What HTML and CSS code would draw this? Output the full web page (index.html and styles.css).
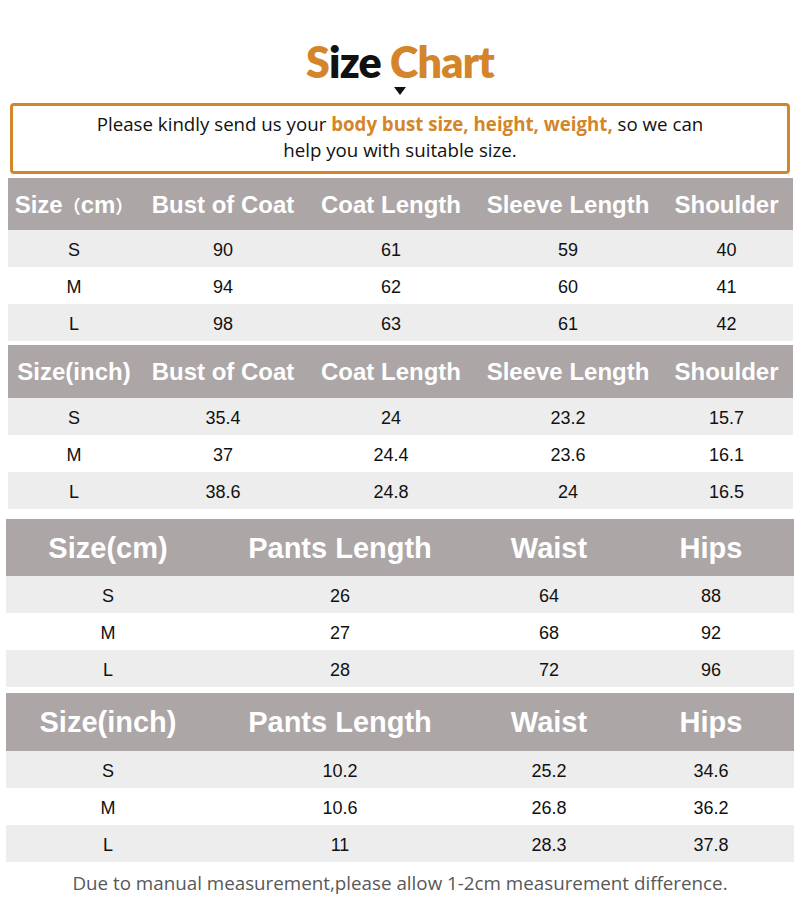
FILE: index.html
```html
<!DOCTYPE html>
<html>
<head>
<meta charset="utf-8">
<link rel="stylesheet" href="styles.css">
</head>
<body>
<div class="page">
  <h1 class="title"><span class="hl">S</span>ize <span class="hl">Chart</span></h1>
  <div class="tri"></div>
  <div class="notice">
    <p>Please kindly send us your <b class="hl">body bust size, height, weight,</b> so we can<br>help you with suitable size.</p>
  </div>

  <div class="tbl top t1">
    <div class="row head"><div>Size<span class="fw">（</span>cm<span class="fw">）</span></div><div>Bust of Coat</div><div>Coat Length</div><div>Sleeve Length</div><div>Shoulder</div></div>
    <div class="row alt"><div>S</div><div>90</div><div>61</div><div>59</div><div>40</div></div>
    <div class="row"><div>M</div><div>94</div><div>62</div><div>60</div><div>41</div></div>
    <div class="row alt"><div>L</div><div>98</div><div>63</div><div>61</div><div>42</div></div>
  </div>

  <div class="tbl top t2">
    <div class="row head"><div>Size(inch)</div><div>Bust of Coat</div><div>Coat Length</div><div>Sleeve Length</div><div>Shoulder</div></div>
    <div class="row alt"><div>S</div><div>35.4</div><div>24</div><div>23.2</div><div>15.7</div></div>
    <div class="row"><div>M</div><div>37</div><div>24.4</div><div>23.6</div><div>16.1</div></div>
    <div class="row alt"><div>L</div><div>38.6</div><div>24.8</div><div>24</div><div>16.5</div></div>
  </div>

  <div class="tbl pants t3">
    <div class="row head"><div>Size(cm)</div><div>Pants Length</div><div>Waist</div><div>Hips</div></div>
    <div class="row alt"><div>S</div><div>26</div><div>64</div><div>88</div></div>
    <div class="row"><div>M</div><div>27</div><div>68</div><div>92</div></div>
    <div class="row alt"><div>L</div><div>28</div><div>72</div><div>96</div></div>
  </div>

  <div class="tbl pants t4">
    <div class="row head"><div>Size(inch)</div><div>Pants Length</div><div>Waist</div><div>Hips</div></div>
    <div class="row alt"><div>S</div><div>10.2</div><div>25.2</div><div>34.6</div></div>
    <div class="row"><div>M</div><div>10.6</div><div>26.8</div><div>36.2</div></div>
    <div class="row alt"><div>L</div><div>11</div><div>28.3</div><div>37.8</div></div>
  </div>

  <p class="foot">Due to manual measurement,please allow 1-2cm measurement difference.</p>
</div>
</body>
</html>
```

FILE: styles.css
```css
html, body {
  margin: 0;
  padding: 0;
  background: #ffffff;
}
.page {
  width: 800px;
  height: 904px;
  display: flex;
  flex-direction: column;
  align-items: center;
  overflow: hidden;
}
.hl {
  color: #d4852a;
}
.title {
  margin: 40px 0 0 0;
  height: 43px;
  font-family: Lato, "Open Sans", sans-serif;
  font-weight: 800;
  font-size: 43px;
  line-height: 43px;
  color: #111111;
  letter-spacing: -0.8px;
}
.tri {
  margin-top: 4px;
  width: 0;
  height: 0;
  border-left: 6px solid transparent;
  border-right: 6px solid transparent;
  border-top: 8px solid #111111;
}
.notice {
  margin-top: 8px;
  width: 780px;
  height: 71px;
  box-sizing: border-box;
  border: 3px solid #d4852a;
  border-radius: 4px;
  padding-bottom: 3px;
  display: flex;
  align-items: center;
  justify-content: center;
}
.notice p {
  margin: 0;
  font-family: "Open Sans", "Noto Sans", sans-serif;
  font-size: 18.7px;
  line-height: 26px;
  color: #111111;
  text-align: center;
}
.notice b {
  font-weight: 700;
}
.tbl {
  display: flex;
  flex-direction: column;
  font-family: "Liberation Sans", Arial, sans-serif;
  color: #111111;
}
.tbl .row {
  display: grid;
  height: 37px;
  align-items: center;
  font-size: 18px;
  box-sizing: border-box;
  padding-top: 3px;
}
.tbl .row > div {
  text-align: center;
}
.tbl .alt {
  background: #ededed;
}
.tbl .head {
  background: #aca6a6;
  color: #ffffff;
  font-weight: 700;
  padding-top: 1px;
}
.top {
  width: 785px;
  align-self: flex-start;
  margin-left: 8px;
}
.top .row {
  grid-template-columns: 132px 166px 170px 184px 133px;
}
.top .head {
  height: 52px;
  font-size: 24px;
  line-height: 28px;
}
.top .head .fw {
  font-family: "Noto Sans CJK SC", sans-serif;
  font-weight: 700;
  font-size: 18px;
  line-height: 1;
}
.t1 {
  margin-top: 4px;
}
.t2 {
  margin-top: 4px;
}
.t2 .head {
  height: 53px;
}
.pants {
  width: 788px;
  align-self: flex-start;
  margin-left: 6px;
}
.pants .row {
  grid-template-columns: 204px 260px 158px 166px;
}
.pants .head {
  height: 57px;
  font-size: 29px;
}
.t3 {
  margin-top: 10px;
}
.t4 {
  margin-top: 6px;
}
.t4 .head {
  height: 58px;
}
.foot {
  margin: 9px 0 0 0;
  font-family: "Open Sans", "Noto Sans", sans-serif;
  font-size: 18.8px;
  line-height: 24px;
  color: #585858;
  text-align: center;
}
```
